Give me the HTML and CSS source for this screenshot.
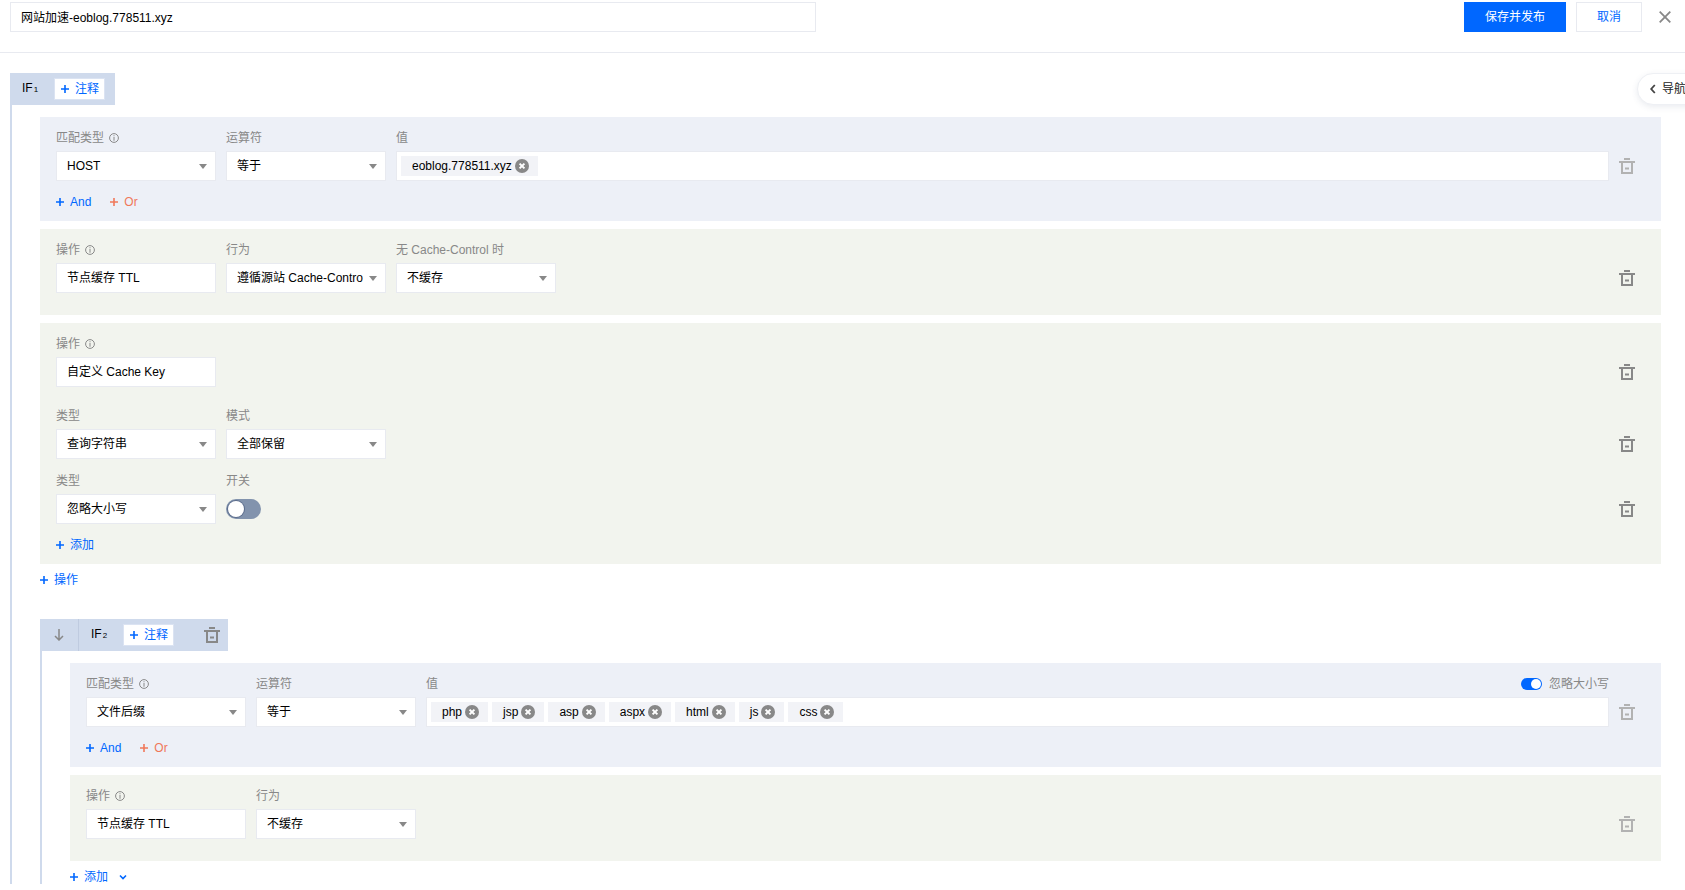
FILE: index.html
```html
<!DOCTYPE html>
<html lang="zh-CN">
<head>
<meta charset="utf-8">
<title>网站加速-eoblog.778511.xyz</title>
<link rel="stylesheet" href="styles.css">
</head>
<body>
<svg class="defs" aria-hidden="true">
  <symbol id="trash" viewBox="0 0 16 16"><path fill="currentColor" d="M5 0h6v2H5zM0 3h16v2H0zM2 5h2v9h8V5h2v11H2zM6 9.500h4v2H6z"/></symbol>
  <symbol id="plus" viewBox="0 0 8 8"><path fill="currentColor" d="M3.200 0h1.600v3.200H8v1.600H4.800V8H3.200V4.800H0V3.200h3.200z"/></symbol>
  <symbol id="info" viewBox="0 0 10 10"><circle cx="5" cy="5" r="4.400" fill="none" stroke="currentColor"/><path fill="currentColor" d="M4.500 2.300h1v1h-1zM4.500 4h1v3.700h-1z"/></symbol>
  <symbol id="x" viewBox="0 0 14 14"><circle cx="7" cy="7" r="7" fill="#888"/><path d="M4.600 4.600l4.800 4.800M9.400 4.600l-4.800 4.800" stroke="#fff" stroke-width="2" fill="none"/></symbol>
</svg>

<header class="topbar">
  <div class="title-input">网站加速-eoblog.778511.xyz</div>
  <button class="btn btn-primary">保存并发布</button>
  <button class="btn btn-ghost">取消</button>
  <svg class="close" viewBox="0 0 12 12"><path d="M.7.700l10.600 10.600M11.300.700L.7 11.300" stroke="currentColor" stroke-width="1.800" fill="none"/></svg>
</header>

<aside class="nav-pill"><svg class="chev" viewBox="0 0 6 10"><path d="M4.800 1L1.200 5l3.600 4" stroke="currentColor" stroke-width="1.800" fill="none"/></svg><span>导航</span></aside>

<main class="main">
  <section class="rule">
    <div class="rule-head rule-head-1">
      <span class="if-name">IF<small>1</small></span>
      <button class="note"><svg class="plus"><use href="#plus"/></svg>注释</button>
    </div>
    <div class="rule-body">
      <div class="block block-match">
        <div class="row">
          <div class="field"><div class="label">匹配类型<svg class="info"><use href="#info"/></svg></div><div class="control select">HOST</div></div>
          <div class="field"><div class="label">运算符</div><div class="control select">等于</div></div>
          <div class="field field-grow"><div class="label">值</div><div class="control tags"><span class="tag">eoblog.778511.xyz<svg class="tag-x"><use href="#x"/></svg></span></div></div>
          <svg class="trash trash-light"><use href="#trash"/></svg>
        </div>
        <div class="links"><a class="link"><svg class="plus"><use href="#plus"/></svg>And</a><a class="link link-or"><svg class="plus"><use href="#plus"/></svg>Or</a></div>
      </div>

      <div class="block block-action block-short">
        <div class="row">
          <div class="field"><div class="label">操作<svg class="info"><use href="#info"/></svg></div><div class="control">节点缓存 TTL</div></div>
          <div class="field"><div class="label">行为</div><div class="control select"><span class="clip">遵循源站 Cache-Control</span></div></div>
          <div class="field"><div class="label">无 Cache-Control 时</div><div class="control select">不缓存</div></div>
          <svg class="trash"><use href="#trash"/></svg>
        </div>
      </div>

      <div class="block block-action">
        <div class="row">
          <div class="field"><div class="label">操作<svg class="info"><use href="#info"/></svg></div><div class="control">自定义 Cache Key</div></div>
          <svg class="trash"><use href="#trash"/></svg>
        </div>
        <div class="row row-second">
          <div class="field"><div class="label">类型</div><div class="control select">查询字符串</div></div>
          <div class="field"><div class="label">模式</div><div class="control select">全部保留</div></div>
          <svg class="trash"><use href="#trash"/></svg>
        </div>
        <div class="row row-third">
          <div class="field"><div class="label">类型</div><div class="control select">忽略大小写</div></div>
          <div class="field"><div class="label">开关</div><div class="switch-box"><span class="switch"><span class="knob"></span></span></div></div>
          <svg class="trash"><use href="#trash"/></svg>
        </div>
        <div class="links"><a class="link"><svg class="plus"><use href="#plus"/></svg>添加</a></div>
      </div>

      <a class="link add-action"><svg class="plus"><use href="#plus"/></svg>操作</a>

      <section class="rule rule-nested">
        <div class="rule-head">
          <span class="move"><svg class="arrow" viewBox="0 0 10 12"><path d="M5 0v11M1 7l4 4 4-4" stroke="currentColor" stroke-width="1.500" fill="none"/></svg></span>
          <span class="if-name if-name-2">IF<small>2</small></span>
          <button class="note"><svg class="plus"><use href="#plus"/></svg>注释</button>
          <svg class="trash head-trash"><use href="#trash"/></svg>
        </div>
        <div class="rule-body rule-body-nested">
          <div class="block block-match">
            <div class="row">
              <div class="field"><div class="label">匹配类型<svg class="info"><use href="#info"/></svg></div><div class="control select">文件后缀</div></div>
              <div class="field"><div class="label">运算符</div><div class="control select">等于</div></div>
              <div class="field field-grow">
                <div class="label label-split"><span>值</span><span class="case"><span class="mini-switch"><span class="mini-knob"></span></span>忽略大小写</span></div>
                <div class="control tags">
                  <span class="tag">php<svg class="tag-x"><use href="#x"/></svg></span>
                  <span class="tag">jsp<svg class="tag-x"><use href="#x"/></svg></span>
                  <span class="tag">asp<svg class="tag-x"><use href="#x"/></svg></span>
                  <span class="tag">aspx<svg class="tag-x"><use href="#x"/></svg></span>
                  <span class="tag">html<svg class="tag-x"><use href="#x"/></svg></span>
                  <span class="tag">js<svg class="tag-x"><use href="#x"/></svg></span>
                  <span class="tag">css<svg class="tag-x"><use href="#x"/></svg></span>
                </div>
              </div>
              <svg class="trash trash-light"><use href="#trash"/></svg>
            </div>
            <div class="links"><a class="link"><svg class="plus"><use href="#plus"/></svg>And</a><a class="link link-or"><svg class="plus"><use href="#plus"/></svg>Or</a></div>
          </div>
          <div class="block block-action block-short">
            <div class="row">
              <div class="field"><div class="label">操作<svg class="info"><use href="#info"/></svg></div><div class="control">节点缓存 TTL</div></div>
              <div class="field"><div class="label">行为</div><div class="control select">不缓存</div></div>
              <svg class="trash trash-light"><use href="#trash"/></svg>
            </div>
          </div>
          <div class="add-more"><a class="link"><svg class="plus"><use href="#plus"/></svg>添加</a><svg class="caret" viewBox="0 0 8 6"><path d="M1 1.500l3 3 3-3" stroke="currentColor" stroke-width="1.600" fill="none"/></svg></div>
        </div>
      </section>
    </div>
  </section>
</main>
</body>
</html>
```

FILE: styles.css
```css
* { box-sizing: border-box; }
html, body { margin: 0; height: 100%; overflow: hidden; background: #fff; }
body { position: relative; font: 12px/20px "Liberation Sans", "Noto Sans CJK SC", sans-serif; color: #000; }
.defs { position: absolute; width: 0; height: 0; }

.topbar { display: flex; align-items: flex-start; height: 53px; padding: 2px 14px 0 10px; border-bottom: 1px solid #e8eaf0; }
.title-input { width: 806px; height: 30px; line-height: 30px; padding-left: 10px; border: 1px solid #e8eaf0; margin-right: auto; }
.btn { height: 30px; padding: 0; font: inherit; cursor: pointer; }
.btn-primary { width: 102px; background: #0067ff; color: #fff; border: 0; }
.btn-ghost { width: 66px; margin-left: 10px; background: #fff; color: #0067ff; border: 1px solid #e8eaf0; }
.close { width: 12px; height: 12px; margin: 9px 0 0 17px; color: #888; }

.nav-pill { position: absolute; left: 1637px; top: 73px; width: 70px; height: 32px; display: flex; align-items: center; padding-left: 12px; gap: 6px; background: #fff; border: 1px solid #eef0f4; border-radius: 16px 0 0 16px; box-shadow: 0 2px 6px rgba(50, 70, 110, .1); color: #222; }
.chev { width: 6px; height: 10px; color: #444; }

.main { padding: 20px 24px 40px 10px; }
.rule-head { display: flex; align-items: center; height: 32px; background: #cfdaec; }
.rule-head-1 { width: 105px; padding-left: 12px; }
.if-name { width: 32px; color: #000; font-weight: 500; margin-top: -1px; }
.if-name small { font-size: 8px; margin-left: 1px; }
.if-name-2 { width: 32px; margin-left: 12px; }
.note { display: flex; align-items: center; width: 51px; height: 22px; padding: 0 0 0 6px; background: #fff; border: 1px solid #dbe3f2; color: #0067ff; font: inherit; cursor: pointer; }
.note .plus { margin-right: 6px; }
.plus { width: 8px; height: 8px; flex: none; }

.rule-body { display: flex; flex-direction: column; gap: 8px; padding: 12px 0 0 28px; border-left: 2px solid #cfdaec; }
.rule-nested { margin-top: 21px; }
.rule-nested .rule-head { width: 188px; }
.rule-body-nested { padding-bottom: 0; height: 233px; }

.move { display: flex; align-items: center; justify-content: center; width: 39px; height: 32px; border-right: 1px solid #bfcbe0; color: #888; }
.arrow { width: 10px; height: 12px; }

.block { padding-right: 26px; padding-left: 16px; }
.block-match { background: #edf0f7; padding-bottom: 11px; }
.block-action { background: #f2f4ee; padding-bottom: 11px; }
.block-short { padding-bottom: 22px; }

.row { display: flex; align-items: flex-end; gap: 10px; padding-top: 10px; }
.row-second { margin-top: 8px; }
.row-third { margin-top: 1px; }
.field { flex: 0 0 160px; min-width: 0; }
.field-grow { flex: 1 1 auto; }
.label { display: flex; align-items: center; height: 20px; padding-top: 2px; margin-bottom: 4px; color: #888; white-space: nowrap; }
.label-split { justify-content: space-between; }
.info { width: 10px; height: 10px; margin-left: 5px; color: #888; }

.control { position: relative; height: 30px; line-height: 28px; padding-left: 10px; background: #fff; border: 1px solid #e8eaf0; white-space: nowrap; }
.select { padding-right: 22px; }
.select::after { content: ""; position: absolute; right: 8px; top: 12px; border: 4px solid transparent; border-top: 5px solid #888; border-bottom: 0; }
.clip { display: block; overflow: hidden; }

.tags { display: flex; align-items: center; gap: 4px; padding-left: 4px; }
.tag { display: inline-flex; align-items: center; height: 20px; padding: 0 9px 0 11px; background: #f2f3f7; }
.tag-x { width: 14px; height: 14px; margin-left: 3px; }

.trash { flex: none; width: 16px; height: 16px; margin: 0 0 7px auto; color: #888; }
.trash-light { color: #b2b2b2; }
.head-trash { margin: 0 0 0 30px; }

.links { display: flex; gap: 19px; height: 16px; margin-top: 13px; line-height: 16px; }
.link { display: inline-flex; align-items: center; gap: 6px; color: #0067ff; }
.link-or { color: #f0785a; }

.add-action { height: 20px; margin-top: -2px; }
.switch-box { height: 30px; display: flex; align-items: center; }
.switch { display: flex; align-items: center; width: 35px; height: 20px; padding-left: 2px; border-radius: 10px; background: #8293ad; }
.knob { width: 16px; height: 16px; border-radius: 50%; background: #fff; box-shadow: 0 0 0 1px #5b6c8c; }

.case { display: inline-flex; align-items: center; gap: 7px; }
.mini-switch { display: flex; align-items: center; justify-content: flex-end; width: 21px; height: 12px; padding-right: 1px; border-radius: 6px; background: #0067ff; }
.mini-knob { width: 10px; height: 10px; border-radius: 50%; background: #fff; }

.add-more { display: flex; align-items: center; gap: 11px; height: 14px; margin-top: 1px; line-height: 14px; }
.caret { width: 8px; height: 6px; color: #0067ff; }
```
